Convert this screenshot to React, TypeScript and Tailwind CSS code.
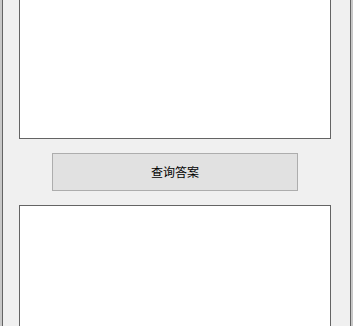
export default function App() {
  return (
    <div className="flex w-[353px] h-[326px] overflow-hidden bg-[#f0f0f0]" style={{}}>
      <div className="w-[2px] h-full bg-[#c8c8c8]" />
      <div className="w-[1px] h-full bg-[#646464]" />
      <div className="flex flex-col w-[347px] pl-[16px] pr-[19px]">
        <div className="h-[139px] w-[312px] shrink-0 bg-white border-x border-b border-[#646464]" />
        <div className="mt-[14px] ml-[33px] w-[246px] h-[38px] shrink-0 flex items-center justify-center bg-[#e1e1e1] border border-[#adadad] text-[12px] text-black" style={{ fontFamily: '"Noto Sans CJK SC", "Noto Sans", sans-serif' }}>
          查询答案
        </div>
        <div className="mt-[14px] h-[200px] w-[312px] shrink-0 bg-white border-x border-t border-[#646464]" />
      </div>
      <div className="w-[1px] h-full bg-[#646464]" />
      <div className="w-[2px] h-full bg-[#c8c8c8]" />
    </div>
  );
}
